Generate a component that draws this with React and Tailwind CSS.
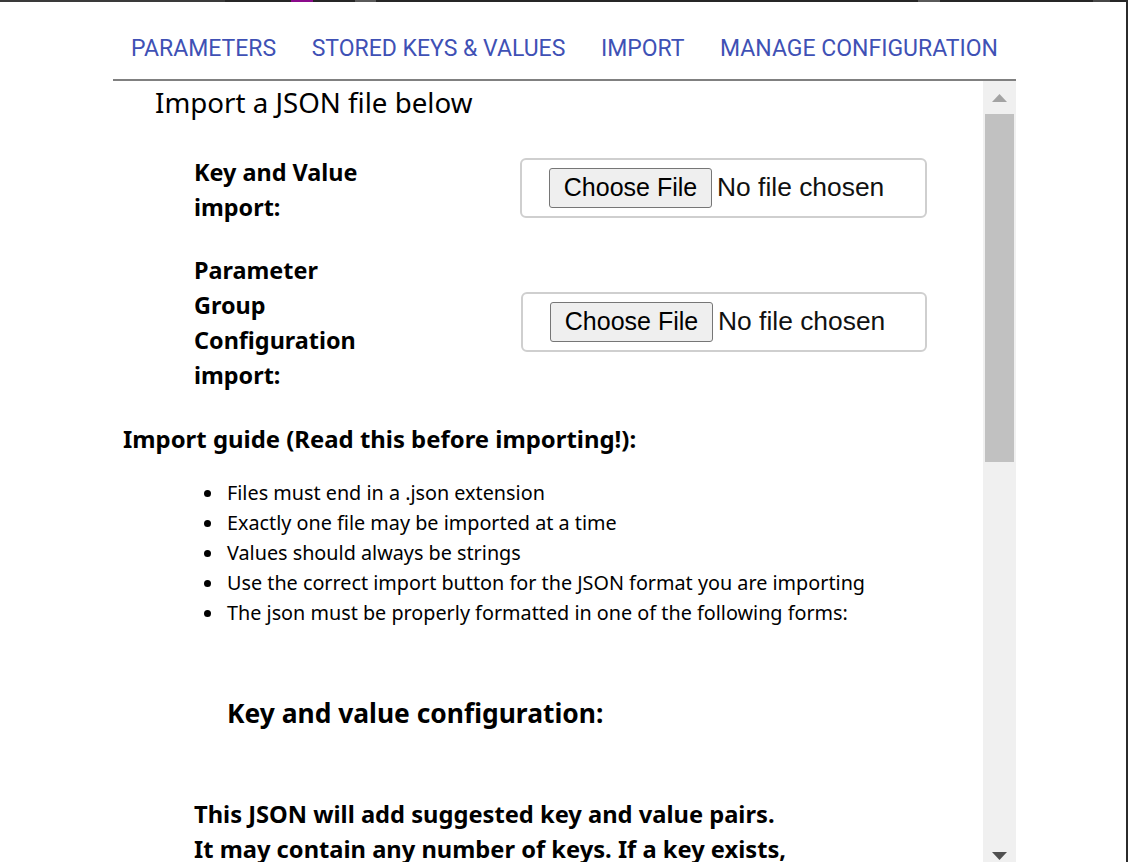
import React from 'react';

const TABS = ['Parameters', 'Stored Keys & Values', 'Import', 'Manage Configuration'];

const GUIDE = [
  'Files must end in a .json extension',
  'Exactly one file may be imported at a time',
  'Values should always be strings',
  'Use the correct import button for the JSON format you are importing',
  'The json must be properly formatted in one of the following forms:',
];

const body = { fontFamily: '"Noto Sans", "Open Sans", sans-serif' };
const arial = { fontFamily: '"Liberation Sans", Arial, sans-serif' };

const FilePicker = ({ className }) => (
  <div className={`flex h-[60px] items-center rounded-[6px] border-2 border-[#cfcfcf] pl-[27px] ${className}`}>
    <div
      className="flex h-[40px] w-[163px] items-center justify-center rounded-[3px] border border-[#767676] bg-[#efefef] text-[25px] text-black"
      style={arial}
    >
      Choose File
    </div>
    <span className="ml-[5px] text-[26.4px] text-[#111]" style={arial}>
      No file chosen
    </span>
  </div>
);

const App = () => {
  return (
    <div className="relative h-[862px] w-full overflow-hidden border-r-2 border-[#2b2b2b] bg-white">
      {/* window frame strip */}
      <div className="flex h-[2px] w-full bg-[#262626]">
        <div className="w-[225px] bg-[#3a3a3a]" />
        <div className="ml-[66px] w-[22px] bg-[#8b0a8b]" />
        <div className="ml-[42px] w-[21px] bg-[#5a5a5a]" />
        <div className="ml-[542px] w-[22px] bg-[#5a5a5a]" />
        <div className="ml-[153px] w-[17px] bg-[#474747]" />
      </div>

      <div className="ml-[113px] w-[903px]">
        {/* Tabs */}
        <div
          className="mt-[17px] flex h-[62px] items-center justify-between border-b-2 border-[#808080] px-[18px]"
          style={{ fontFamily: 'Roboto, sans-serif' }}
        >
          {TABS.map((t) => (
            <span key={t} className="text-[23px] font-normal uppercase text-[#3f51b5]">
              {t}
            </span>
          ))}
        </div>

        {/* Scroll box */}
        <div className="flex h-[791px]">
          <div className="flex-1 overflow-hidden text-black" style={body}>
            <h2 className="ml-[42px] mt-[3px] text-[27.7px] font-normal leading-[36px]">
              Import a JSON file below
            </h2>

            <div className="mt-[35px] flex items-start">
              <label className="ml-[81px] w-[176px] text-[23.4px] font-bold leading-[35px]">
                Key and Value import:
              </label>
              <FilePicker className="ml-[150px] mt-[3px] w-[407px]" />
            </div>

            <div className="mt-[28px] flex items-start">
              <label className="ml-[81px] w-[176px] text-[23.4px] font-bold leading-[35px]">
                Parameter Group Configuration import:
              </label>
              <FilePicker className="ml-[151px] mt-[39px] w-[406px]" />
            </div>

            <h3 className="ml-[10px] mt-[28px] text-[23.9px] font-bold leading-[35px]">
              Import guide (Read this before importing!):
            </h3>

            <ul className="mt-[22px]">
              {GUIDE.map((g) => (
                <li key={g} className="flex items-center text-[19.8px] leading-[30px]">
                  <span className="ml-[91px] mr-[16px] h-[7px] w-[7px] rounded-full bg-black" />
                  {g}
                </li>
              ))}
            </ul>

            <h3 className="ml-[114px] mt-[67px] text-[26.4px] font-bold leading-[36px]">
              Key and value configuration:
            </h3>

            <p className="ml-[81px] mt-[66px] w-[596px] text-[23.7px] font-bold leading-[35px]">
              This JSON will add suggested key and value pairs. It may contain any number of keys. If a key exists,
            </p>
          </div>

          {/* Scrollbar */}
          <div className="flex w-[33px] flex-col items-center bg-[#f0f0f0]">
            <div className="flex h-[33px] items-center justify-center">
              <svg width="15" height="8" viewBox="0 0 15 8">
                <polygon points="7.5,0 15,8 0,8" fill="#a3a3a3" />
              </svg>
            </div>
            <div className="h-[348px] w-[29px] bg-[#c1c1c1]" />
            <div className="flex-1" />
            <div className="flex h-[33px] items-center justify-center">
              <svg width="15" height="8" viewBox="0 0 15 8">
                <polygon points="0,0 15,0 7.5,8" fill="#505050" />
              </svg>
            </div>
          </div>
        </div>
      </div>
    </div>
  );
};

export default App;
